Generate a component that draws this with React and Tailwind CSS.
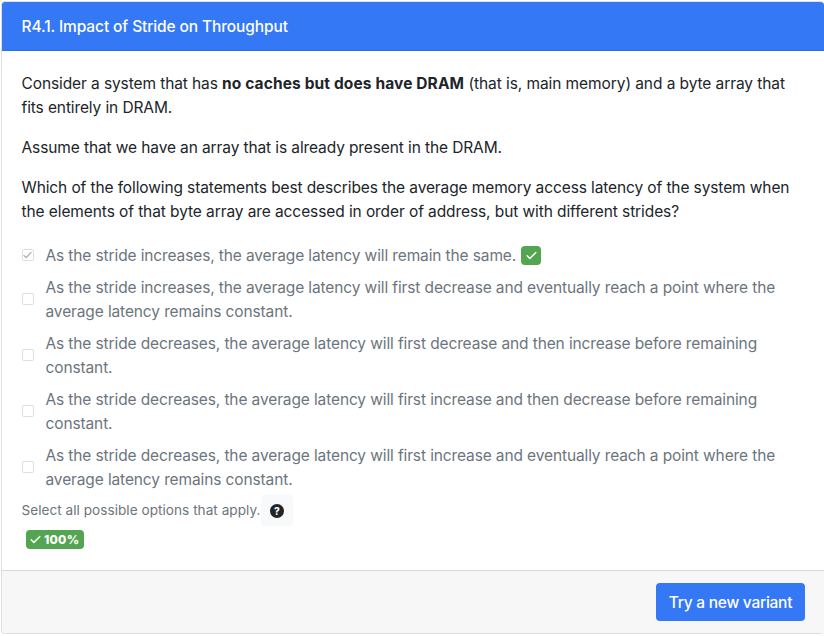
const options = [
  { lines: ['As the stride increases, the average latency will remain the same.'], correct: true },
  { lines: ['As the stride increases, the average latency will first decrease and eventually reach a point where the', 'average latency remains constant.'] },
  { lines: ['As the stride decreases, the average latency will first decrease and then increase before remaining', 'constant.'] },
  { lines: ['As the stride decreases, the average latency will first increase and then decrease before remaining', 'constant.'] },
  { lines: ['As the stride decreases, the average latency will first increase and eventually reach a point where the', 'average latency remains constant.'] },
];

function Check({ className }) {
  return (
    <svg viewBox="0 0 12 10" className={className} fill="none" stroke="currentColor" strokeWidth="1.6" strokeLinecap="round" strokeLinejoin="round">
      <path d="M1.2 5.4 4.2 8.4 10.8 1.6" />
    </svg>
  );
}

function Checkbox({ checked }) {
  return (
    <span className="flex size-3 shrink-0 items-center justify-center rounded-[2px] border border-[#dedede] bg-white text-[#aaaaaa]">
      {checked && <Check className="h-[8px] w-[9px]" />}
    </span>
  );
}

export default function App() {
  return (
    <div className="h-[636px] w-[824px] overflow-hidden bg-white pl-px pt-px font-['Inter','Liberation_Sans',sans-serif] text-[15.5px] leading-6 tracking-[-0.11px] text-[#212529]">
      <div className="flex h-[633px] w-[823px] flex-col overflow-hidden rounded border border-r-0 border-[#dfdfdf]">
        <header className="flex h-[49px] shrink-0 items-center border-b border-[#2b6fe8] bg-[#3478f6] pt-0.5 pl-[19.5px] font-medium tracking-[-0.11px] text-white">
          R4.1. Impact of Stride on Throughput
        </header>
        <main className="flex h-[519px] shrink-0 flex-col pl-[19.5px] pt-[21px] whitespace-nowrap">
          <p>
            <span className="tracking-[-0.1px]">Consider a system that has </span>
            <b className="tracking-[0.12px]">no caches but does have DRAM</b>
            <span className="tracking-[-0.08px]"> (that is, main memory) and a byte array that</span>
            <br />
            fits entirely in DRAM.
          </p>
          <p className="mt-4">Assume that we have an array that is already present in the DRAM.</p>
          <p className="mt-4">
            Which of the following statements best describes the average memory access latency of the system when
            <br />
            <span className="tracking-[-0.09px]">the elements of that byte array are accessed in order of address, but with different strides?</span>
          </p>
          <ul className="mt-[19px] flex flex-col gap-2 text-[#6c757d]">
            {options.map((option, i) => (
              <li key={i} className="flex items-center gap-3">
                <Checkbox checked={option.correct} />
                <div className="tracking-[-0.12px]">
                  {option.lines.map((line) => (
                    <div key={line} className="translate-y-px">{line}</div>
                  ))}
                </div>
                {option.correct && (
                  <span className="-ml-[7px] flex h-[19px] w-5 items-center justify-center rounded bg-[#53a551] text-white">
                    <Check className="h-[9px] w-[11px]" />
                  </span>
                )}
              </li>
            ))}
          </ul>
          <div className="mt-1 flex h-[31px] items-center text-[13.56px] tracking-[0.05px] text-[#6c757d]">
            <span className="w-[239.5px] pb-0.5">Select all possible options that apply.</span>
            <button className="flex h-[31px] w-8 items-center justify-center rounded bg-[#f8f9fa]">
              <span className="flex size-3.5 items-center justify-center rounded-full bg-[#212529] text-[10px] leading-none font-extrabold text-white">?</span>
            </button>
          </div>
          <div className="mt-1 ml-1 flex h-[19px] w-[58px] items-center gap-[3.5px] rounded bg-[#53a551] pl-1 text-[12px] font-extrabold tracking-[0.25px] text-white">
            <Check className="h-[9px] w-[11px]" />
            100%
          </div>
        </main>
        <footer className="flex flex-1 items-center justify-end border-t border-[#d9d9d9] bg-[#f7f7f7] pr-[19px]">
          <button className="h-[38px] w-[149px] rounded bg-[#3478f6] pt-0.5 text-center font-medium tracking-[-0.26px] text-white">Try a new variant</button>
        </footer>
      </div>
    </div>
  );
}
